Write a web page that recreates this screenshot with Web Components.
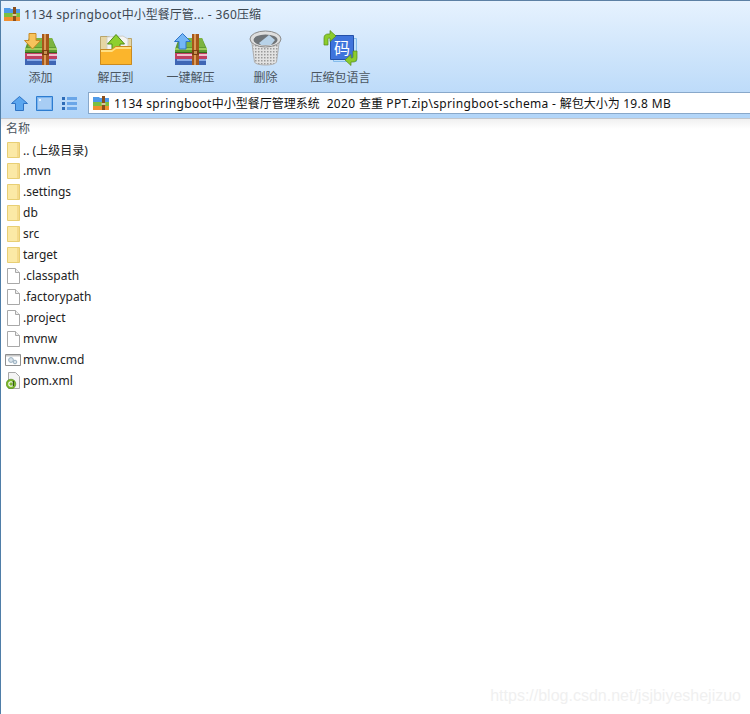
<!DOCTYPE html>
<html>
<head>
<meta charset="utf-8">
<style>
  html, body { margin: 0; padding: 0; background: #fff; }
  body { font: 12px "Noto Sans", "Noto Sans CJK SC", sans-serif; }
  /* latin is wider in the original, cjk is not */
  .wide { letter-spacing: .33px; }
  .wide i { font-style: normal; letter-spacing: 0; }
</style>
</head>
<body>
<zip-window>
  <zip-header>
    <span slot="title" class="wide">1134 springboot<i>中小型餐厅管</i>... - 360<i>压缩</i></span>
    <tool-button slot="tools" icon="add">添加</tool-button>
    <tool-button slot="tools" icon="extract">解压到</tool-button>
    <tool-button slot="tools" icon="onekey">一键解压</tool-button>
    <tool-button slot="tools" icon="trash">删除</tool-button>
    <tool-button slot="tools" icon="lang">压缩包语言</tool-button>
    <span slot="path" class="wide">1134 springboot<i>中小型餐厅管理系统</i>&nbsp; 2020 <i>查重</i> PPT.zip\springboot-schema - <i>解包大小为</i> 19.8 MB</span>
  </zip-header>
  <file-list>
    <file-row icon="folder">.. (上级目录)</file-row>
    <file-row icon="folder">.mvn</file-row>
    <file-row icon="folder">.settings</file-row>
    <file-row icon="folder">db</file-row>
    <file-row icon="folder">src</file-row>
    <file-row icon="folder">target</file-row>
    <file-row icon="file">.classpath</file-row>
    <file-row icon="file">.factorypath</file-row>
    <file-row icon="file">.project</file-row>
    <file-row icon="file">mvnw</file-row>
    <file-row icon="cmd">mvnw.cmd</file-row>
    <file-row icon="xml">pom.xml</file-row>
  </file-list>
  <water-mark>https://blog.csdn.net/jsjbiyeshejizuo</water-mark>
</zip-window>

<script>
// book stack used by the add / one key buttons
function bookIcon(arrow) {
  return `<svg width="34" height="33" viewBox="0 0 34 33">
    <path d="M1 26h31v6H1z" fill="#3f66b4"/><path d="M3 26h29v2H3z" fill="#86a8e4"/>
    <path d="M1 20h32v6H1z" fill="#bf3f62"/><path d="M3 21h30v2H3z" fill="#f0c0cc"/>
    <path d="M5 5h23l5 11v4H1v-4z" fill="#5f9a30"/><path d="M6 5h22l3 9H4z" fill="#7cb440"/><path d="M1 15h32v2H1z" fill="#9ccc5c"/>
    <path d="M1 19h32v1H1z" fill="#35691a"/>
    <path d="M18 1h7v31h-7z" fill="#a5571a"/><path d="M20 1h2v31h-2z" fill="#dc9a58"/><path d="M18 17h7v5h-7z" fill="#7a3f10"/><path d="M20 18h3v3h-3z" fill="#c89050"/>
    ${arrow}
  </svg>`;
}

const icons = {
  add: bookIcon(`<path d="M5 .5h7v7h4.500L8.500 16 .5 7.500h4.500z" fill="#f7c35c" stroke="#c98a24"/>`),
  onekey: bookIcon(`<path d="M8.500 .5l8 8H12V16H5V8.500H.5z" fill="#74b6f6" stroke="#2f74c8"/>`),
  extract: `<svg width="34" height="33" viewBox="0 0 34 33">
    <path d="M1.500 3.500h9l2 2h20v26h-31z" fill="#e6d6a4" stroke="#b8a56c"/>
    <path d="M8 4l16-1 5 3v12H8z" fill="#f4f4f2" stroke="#cfcfca"/>
    <path d="M13 18v-7H8.500L17 1.500 25.500 11H21v7z" fill="#8fd02e" stroke="#4f8a18"/>
    <path d="M1.500 16.500h11l4-3h16v18h-31z" fill="#fbb52c" stroke="#c98a20"/>
    <path d="M2 17h11l4-3h15v2H17l-4 3H2z" fill="#ffe084"/>
  </svg>`,
  trash: `<svg width="33" height="36" viewBox="0 0 33 36">
    <defs><pattern id="m" width="3" height="3" patternUnits="userSpaceOnUse"><rect width="3" height="3" fill="#e2e2e2"/><rect width="1.500" height="1.500" fill="#9a9a9a"/></pattern></defs>
    <path d="M2.500 10l3 22c1 4 21 4 22 0l3-22z" fill="url(#m)" stroke="#b0b0b0"/>
    <ellipse cx="16.500" cy="9" rx="15.500" ry="8" fill="#dedede" stroke="#8a8a8a"/>
    <ellipse cx="16.500" cy="10" rx="12" ry="5.500" fill="#6f7478"/>
    <path d="M10 13l10-8 6 5-4 5H12z" fill="#b8d2e8"/>
  </svg>`,
  lang: `<svg width="35" height="36" viewBox="0 0 35 36">
    <path d="M10.500 8.500h23v23h-23z" fill="#bfe0fa" stroke="#84bcec"/>
    <path d="M7.500 5.500h23v24h-23z" fill="#3f74dc" stroke="#2450a8"/>
    <text x="19" y="24" font-size="16" fill="#fff" text-anchor="middle" font-family="Noto Sans CJK SC">码</text>
    <path d="M1 15V8c0-3 2-4 4-4h2V.5L13 6l-6 5.500V8H6c-1 0-1 1-1 2v5z" fill="#8ccc2c" stroke="#558a18" stroke-width=".7"/>
    <path d="M34 21v7c0 3-2 4-4 4h-2v3.500L22 30l6-5.500V28h1c1 0 1-1 1-2v-5z" fill="#8ccc2c" stroke="#558a18" stroke-width=".7"/>
  </svg>`,
  folder: `<svg width="13" height="16" viewBox="0 0 13 16">
    <path d="M.5.5h12v15H.5z" fill="#fbe9a6" stroke="#e8cf74"/>
    <path d="M10 1h2v14h-2z" fill="#f5da8c"/>
  </svg>`,
  file: `<svg width="13" height="16" viewBox="0 0 13 16">
    <path d="M.5.5h8l4 4v11H.5z" fill="#fff" stroke="#a8a8a8"/>
    <path d="M8.500 .5v4h4" fill="#eee" stroke="#a8a8a8"/>
  </svg>`,
  cmd: `<svg width="16" height="12" viewBox="0 0 16 12">
    <path d="M.5.5h15v11H.5z" fill="#fff" stroke="#8f8f8f"/>
    <path d="M1 1h14v1.500H1z" fill="#c6c6c6"/>
    <circle cx="6" cy="6" r="2.400" fill="#d8e2ea" stroke="#9ab0c0"/>
    <circle cx="10" cy="8" r="1.800" fill="#d8e2ea" stroke="#9ab0c0"/>
  </svg>`,
  xml: `<svg width="14" height="17" viewBox="0 0 14 17">
    <path d="M2.500.5h7l4 4v12h-11z" fill="#f4f4f4" stroke="#a8a8a8"/>
    <circle cx="5" cy="12" r="4.800" fill="#7cb82a" stroke="#4d8514" stroke-width=".6"/>
    <circle cx="5" cy="12" r="2.200" fill="none" stroke="#fff" stroke-width="1.100"/>
    <path d="M7.300 9v5" stroke="#234a08" stroke-width="1.200"/>
  </svg>`
};

// small archive icon in the title and address bar
function zipSmall() {
  return `<svg style="flex:none" width="16" height="14" viewBox="0 0 16 14">
    <path d="M0 1h6l1 1h9v4H0z" fill="#4f9ae8"/><path d="M0 6h16v4H0z" fill="#7cc040"/><path d="M0 10h16v4H0z" fill="#f09030"/>
    <path d="M9 0h3v14H9z" fill="#8a4f1c"/><path d="M8.500 7h4v2h-4z" fill="#d8c8a0"/>
  </svg>`;
}

class ZipWindow extends HTMLElement {
  constructor() {
    super();
    this.attachShadow({mode: "open"}).innerHTML = `
    <style>
      :host { display: block; position: relative; height: 714px; box-sizing: border-box; border-left: 1px solid #4f7ea8; overflow: hidden; color: #1a1a1a; }
    </style>
    <slot></slot>`;
  }
}

class ZipHeader extends HTMLElement {
  constructor() {
    super();
    this.attachShadow({mode: "open"}).innerHTML = `
    <style>
      :host { display: block; height: 119px; box-sizing: border-box; border-top: 1px solid #5c80a4; border-bottom: 1px solid #c2c6cc; background: linear-gradient(#e6f2fe, #b2d5f8); }
      .title { display: flex; align-items: center; gap: 4px; height: 26px; padding-left: 3px; color: #3c4650; }
      .tools { display: flex; height: 65px; padding-left: 2px; }
      .nav { display: flex; align-items: center; height: 22px; }
      .btns { display: flex; align-items: center; width: 87px; flex: none; }
      .btns svg { display: block; }
      .addr { flex: 1; height: 20px; display: flex; align-items: center; gap: 5px; padding-left: 4px; background: #fff; border: 1px solid #88a8ca; border-right: 0; color: #111; white-space: nowrap; }
    </style>
    <div class="title">${zipSmall()}<slot name="title"></slot></div>
    <div class="tools"><slot name="tools"></slot></div>
    <div class="nav">
      <div class="btns">
        <svg style="margin-left:10px" width="17" height="15" viewBox="0 0 17 15"><path d="M8.500 .5l8 7H12.500v7h-8v-7H.5z" fill="#5aa6ef" stroke="#2d72c4"/></svg>
        <svg style="margin-left:8px" width="17" height="15" viewBox="0 0 17 15"><path d="M.5.5h16v14H.5z" fill="#7cb4ee" stroke="#2d7cd0"/><path d="M2 2h13v11H2z" fill="#a8cdf4"/><path d="M3 3h2v2H3z" fill="#e8f4ff"/></svg>
        <svg style="margin-left:9px" width="15" height="15" viewBox="0 0 15 15"><path d="M0 1h3v3H0zM0 6h3v3H0zM0 11h3v3H0z" fill="#2d6cb8"/><path d="M5 1h10v3H5zM5 6h10v3H5zM5 11h10v3H5z" fill="#6aa6e8"/></svg>
      </div>
      <div class="addr">${zipSmall()}<slot name="path"></slot></div>
    </div>`;
  }
}

class ToolButton extends HTMLElement {
  constructor() {
    super();
    this.attachShadow({mode: "open"}).innerHTML = `
    <style>
      :host { display: flex; flex-direction: column; align-items: center; width: 75px; color: #4a5560; }
      .ic { height: 39px; display: flex; align-items: flex-end; justify-content: center; }
      .lb { margin-top: 4px; line-height: 16px; white-space: nowrap; }
    </style>
    <div class="ic">${icons[this.getAttribute("icon")] || ""}</div>
    <div class="lb"><slot></slot></div>`;
  }
}

class FileList extends HTMLElement {
  constructor() {
    super();
    this.attachShadow({mode: "open"}).innerHTML = `
    <style>
      :host { display: block; }
      .shade { height: 20px; box-sizing: border-box; padding: 2px 0 0 5px; line-height: 16px; color: #4a5560; background: linear-gradient(#f0f0f0, #fff 10px); }
    </style>
    <div class="shade">名称</div>
    <slot></slot>`;
  }
}

class FileRow extends HTMLElement {
  constructor() {
    super();
    this.attachShadow({mode: "open"}).innerHTML = `
    <style>
      :host { display: flex; align-items: center; height: 21px; color: #222; white-space: nowrap; }
      .ic { width: 22px; flex: none; display: flex; justify-content: center; padding-left: 2px; box-sizing: border-box; }
      svg { display: block; }
    </style>
    <div class="ic">${icons[this.getAttribute("icon")] || ""}</div>
    <slot></slot>`;
  }
}

class WaterMark extends HTMLElement {
  constructor() {
    super();
    this.attachShadow({mode: "open"}).innerHTML = `
    <style>
      :host { position: absolute; right: 9px; bottom: 9px; font: 16px "Liberation Sans", sans-serif; color: #f0f0f0; white-space: nowrap; }
    </style>
    <slot></slot>`;
  }
}

customElements.define("zip-window", ZipWindow);
customElements.define("zip-header", ZipHeader);
customElements.define("tool-button", ToolButton);
customElements.define("file-list", FileList);
customElements.define("file-row", FileRow);
customElements.define("water-mark", WaterMark);
</script>
</body>
</html>
